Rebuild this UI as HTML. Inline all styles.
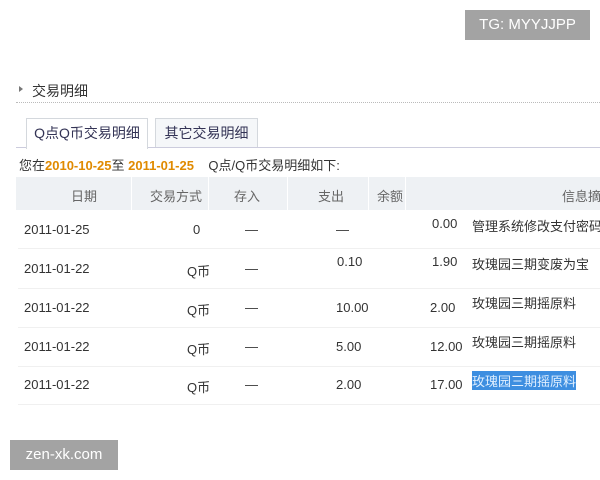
<!DOCTYPE html>
<html><head><meta charset="utf-8"><style>
body{margin:0;width:600px;height:480px;background:#fff;position:relative;overflow:hidden;font-family:"Liberation Sans","Noto Sans CJK SC",sans-serif;color:#333;font-size:13px}
.a{position:absolute;white-space:nowrap}
.hd{position:absolute;left:16px;top:177px;width:584px;height:33px;background:#eef1f4}
.sep{position:absolute;top:177px;width:1px;height:33px;background:#fff}
.rl{position:absolute;left:18px;width:582px;height:1px;background:#f0f0f0}
.o{color:#e08a00;font-weight:bold}
</style></head><body>
<div class="a" style="left:465px;top:10px;width:125px;height:30px;background:#a3a3a3;color:#fff;font-size:15px;line-height:30px;text-align:center">TG: MYYJJPP</div>
<div class="a" style="left:19px;top:86px;width:0;height:0;border-left:4px solid #777;border-top:3px solid transparent;border-bottom:3px solid transparent"></div>
<div class="a" style="left:32px;top:81px;font-size:14px;color:#333">交易明细</div>
<div class="a" style="left:16px;top:102px;width:584px;border-top:1px dotted #bbb"></div>
<div class="a" style="left:16px;top:147px;width:584px;height:1px;background:#ccd"></div>
<div class="a" style="left:26px;top:118px;width:120px;height:30px;border:1px solid #d4d8dd;border-bottom:none;background:#fff;font-size:14px;line-height:28px;text-align:center;color:#335">Q点Q币交易明细</div>
<div class="a" style="left:155px;top:118px;width:101px;height:28px;border:1px solid #d4d8dd;border-bottom:none;background:#f5f7f9;font-size:14px;line-height:28px;text-align:center;color:#335">其它交易明细</div>
<div class="a" style="left:19px;top:155px;font-size:13px">您在<span class="o">2010-10-25</span>至 <span class="o">2011-01-25</span>&nbsp;&nbsp;&nbsp;&nbsp;Q点/Q币交易明细如下:</div>
<div class="hd"></div>
<div class="sep" style="left:131px"></div><div class="sep" style="left:208px"></div><div class="sep" style="left:287px"></div><div class="sep" style="left:368px"></div><div class="sep" style="left:405px"></div>
<div class="a" style="left:71px;top:186px;color:#666">日期</div>
<div class="a" style="left:150px;top:186px;color:#666">交易方式</div>
<div class="a" style="left:234px;top:186px;color:#666">存入</div>
<div class="a" style="left:318px;top:186px;color:#666">支出</div>
<div class="a" style="left:377px;top:186px;color:#666">余额</div>
<div class="a" style="left:562px;top:186px;color:#666">信息摘</div>
<div class="rl" style="top:248px"></div><div class="rl" style="top:288px"></div><div class="rl" style="top:327px"></div><div class="rl" style="top:366px"></div><div class="rl" style="top:404px"></div>
<div class="a" style="left:24px;top:222px">2011-01-25</div><div class="a" style="left:193px;top:222px">0</div><div class="a" style="left:245px;top:222px">—</div><div class="a" style="left:336px;top:222px">—</div><div class="a" style="left:432px;top:216px">0.00</div><div class="a" style="left:472px;top:216px">管理系统修改支付密码</div>
<div class="a" style="left:24px;top:261px">2011-01-22</div><div class="a" style="left:187px;top:261px">Q币</div><div class="a" style="left:245px;top:261px">—</div><div class="a" style="left:337px;top:254px">0.10</div><div class="a" style="left:432px;top:254px">1.90</div><div class="a" style="left:472px;top:254px">玫瑰园三期变废为宝</div>
<div class="a" style="left:24px;top:300px">2011-01-22</div><div class="a" style="left:187px;top:300px">Q币</div><div class="a" style="left:245px;top:300px">—</div><div class="a" style="left:336px;top:300px">10.00</div><div class="a" style="left:430px;top:300px">2.00</div><div class="a" style="left:472px;top:293px">玫瑰园三期摇原料</div>
<div class="a" style="left:24px;top:339px">2011-01-22</div><div class="a" style="left:187px;top:339px">Q币</div><div class="a" style="left:245px;top:339px">—</div><div class="a" style="left:336px;top:339px">5.00</div><div class="a" style="left:430px;top:339px">12.00</div><div class="a" style="left:472px;top:332px">玫瑰园三期摇原料</div>
<div class="a" style="left:24px;top:377px">2011-01-22</div><div class="a" style="left:187px;top:377px">Q币</div><div class="a" style="left:245px;top:377px">—</div><div class="a" style="left:336px;top:377px">2.00</div><div class="a" style="left:430px;top:377px">17.00</div><div class="a" style="left:472px;top:371px;background:#3d8ee0;color:#dfefff">玫瑰园三期摇原料</div>
<div class="a" style="left:10px;top:440px;width:108px;height:30px;background:#a3a3a3;color:#fff;font-size:15px;line-height:30px;text-align:center">zen-xk.com</div>
</body></html>
